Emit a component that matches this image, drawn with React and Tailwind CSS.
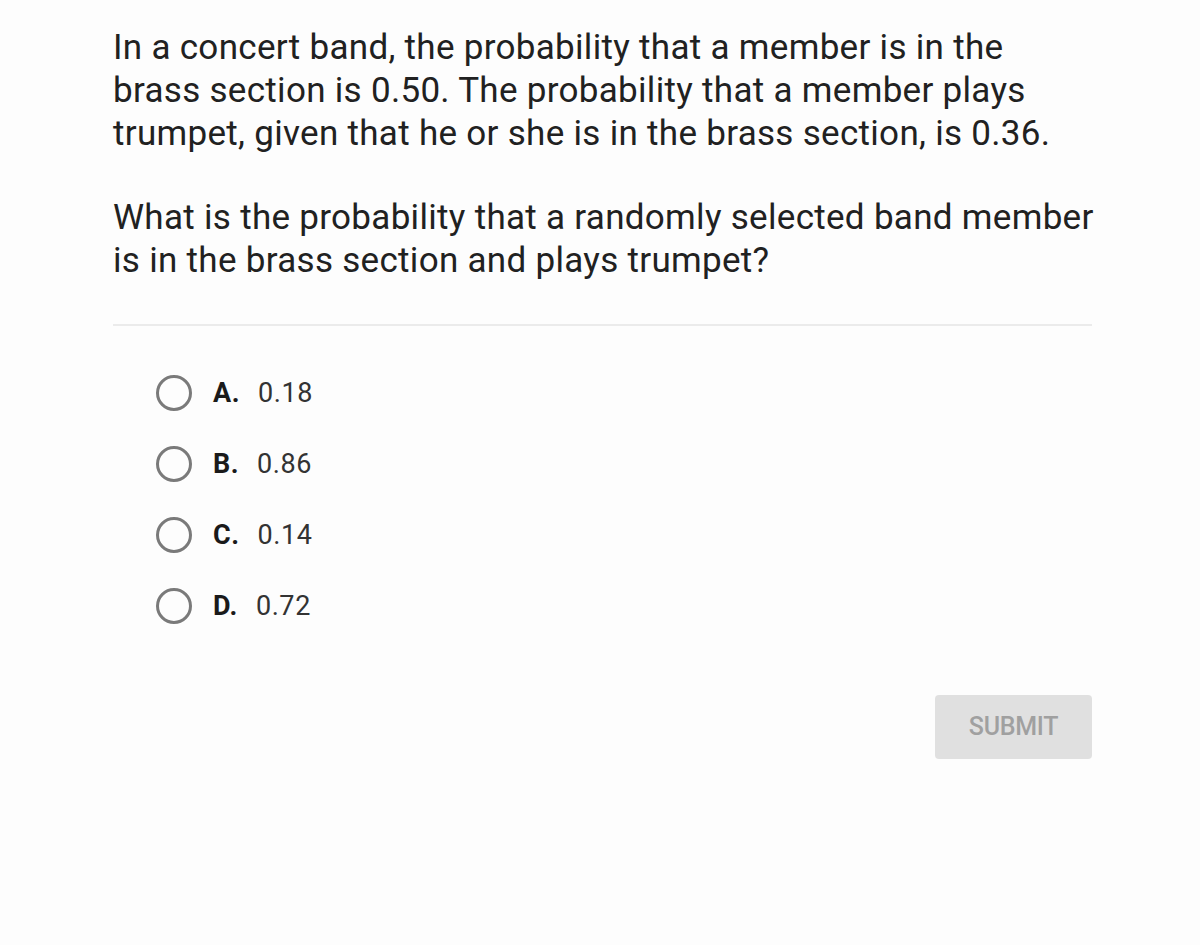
import React, { useState } from "react";

const OPTIONS = [
  { letter: "A", value: "0.18" },
  { letter: "B", value: "0.86" },
  { letter: "C", value: "0.14" },
  { letter: "D", value: "0.72" },
];

export default function App() {
  const [selected, setSelected] = useState(null);

  return (
    <div className="min-h-[945px] w-[1200px] bg-[#fdfdfd] font-['Roboto',sans-serif] text-[#212121]">
      <div className="pl-[113px] pr-[90px] pt-[26px]">
        <p className="text-[35px] leading-[43px] tracking-[0.3px]">
          In a concert band, the probability that a member is in the<br />
          brass section is 0.50. The probability that a member plays<br />
          trumpet, given that he or she is in the brass section, is 0.36.
        </p>
        <p className="mt-[41px] text-[35px] leading-[43px] tracking-[0.3px]">
          What is the probability that a randomly selected band member<br />
          is in the brass section and plays trumpet?
        </p>
        <div className="mt-[42px] h-[2px] w-[979px] bg-[#ebebeb]" />

        <div className="mt-[49px] flex flex-col gap-[35px] pl-[43px]">
          {OPTIONS.map((opt) => (
            <button
              key={opt.letter}
              type="button"
              onClick={() => setSelected(opt.letter)}
              className="flex h-[36px] items-center text-left"
            >
              <span className="flex h-[36px] w-[36px] items-center justify-center rounded-full border-[3px] border-[#7a7a7a]">
                {selected === opt.letter && (
                  <span className="h-[18px] w-[18px] rounded-full bg-[#7a7a7a]" />
                )}
              </span>
              <span className="ml-[21px] text-[27px] font-bold tracking-[0.5px] text-[#1a1a1a]">{opt.letter}.</span>
              <span className="ml-[18px] text-[27px] tracking-[0.6px] text-[#333]">{opt.value}</span>
            </button>
          ))}
        </div>

        <div className="mt-[71px] flex w-[979px] justify-end">
          <button
            type="button"
            className="flex h-[64px] w-[157px] items-center justify-center rounded-[4px] bg-[#e0e0e0] text-[25px] font-medium tracking-[-0.3px] text-[#a0a0a0]"
          >
            SUBMIT
          </button>
        </div>
      </div>
    </div>
  );
}
